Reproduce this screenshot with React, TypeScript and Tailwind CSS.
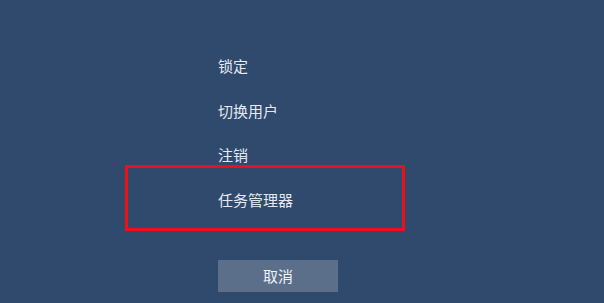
import React from "react";

export default function App() {
  const items = ["锁定", "切换用户", "注销", "任务管理器"];
  return (
    <div
      className="relative w-[604px] h-[303px] overflow-hidden bg-[#304a6d] text-[#e4e9f1]"
      style={{ fontFamily: '"Noto Sans CJK SC", "Noto Sans", sans-serif' }}
    >
      <div className="flex flex-col pl-[218px] pt-[55px]">
        {items.map((t) => (
          <div key={t} className="h-[44.7px] text-[15px] leading-[22px]">
            {t}
          </div>
        ))}
        <button className="mt-[26px] w-[120px] h-[32px] bg-[#5b6f8b] text-[15px] leading-[22px] text-[#eef1f6] flex items-center justify-center">
          取消
        </button>
      </div>
      <div className="absolute left-[125px] top-[165px] w-[280px] h-[66px] border-[3px] border-[#ee0f18]" />
    </div>
  );
}
